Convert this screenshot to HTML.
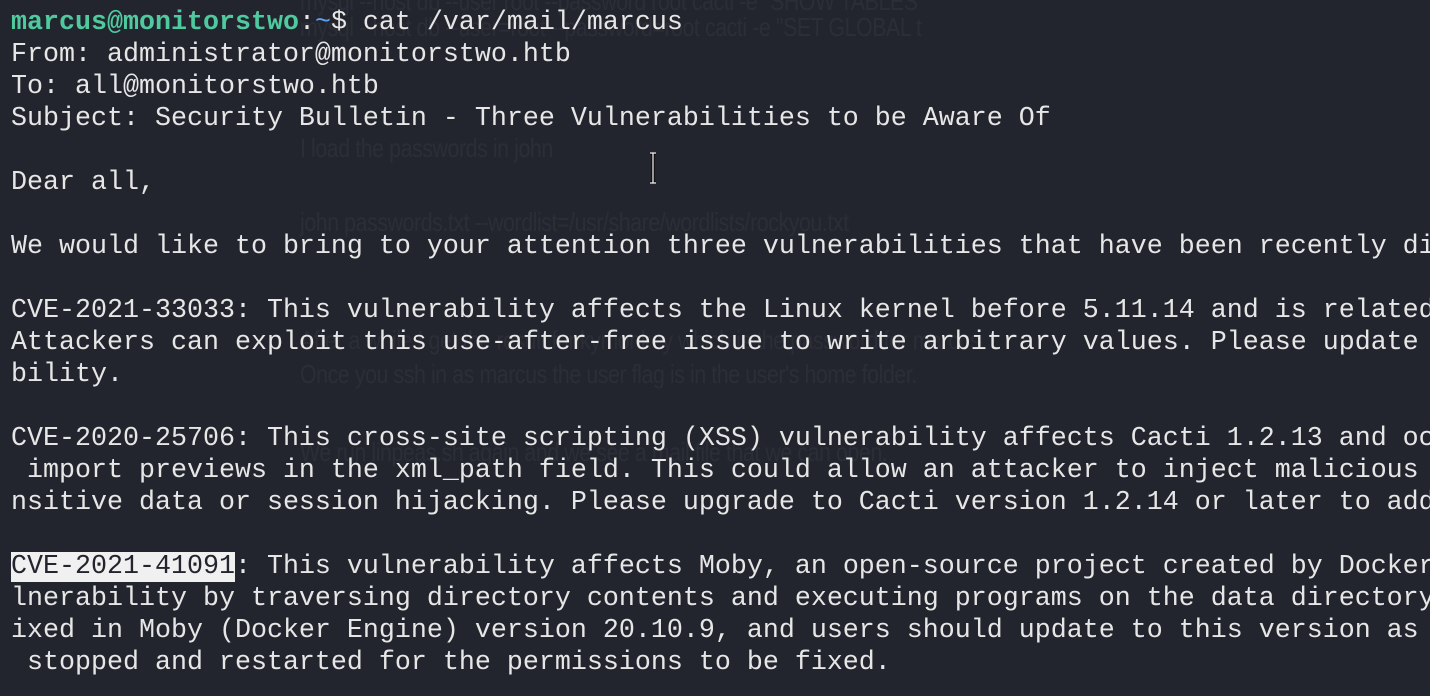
<!DOCTYPE html>
<html><head><meta charset="utf-8"><style>
html,body{margin:0;padding:0;background:#23252e;width:1430px;height:696px;overflow:hidden;position:relative}
.ghost{position:absolute;font-family:"Liberation Sans",sans-serif;color:#2c2e37;font-size:26px;white-space:pre;transform-origin:0 0;transform:scaleX(0.82);letter-spacing:-0.5px}
.term{position:absolute;left:11px;top:7px;width:1419px;overflow:hidden;font-family:"Liberation Mono","DejaVu Sans Mono",monospace;font-size:26.67px;line-height:32px;color:#e6e6e6;white-space:normal}
.term div{height:32px;white-space:pre}
.g{color:#4fc99e;font-weight:bold}
.b{color:#5aa0f0}
.hl{background:#f0f0f0;color:#23252e}
.cur{position:absolute;left:649px;top:152px;width:8px;height:32px}
</style></head><body>
<div class="ghost" style="left:300px;top:-14px">mysql --host db --user root --password root cacti -e "SHOW TABLES"</div>
<div class="ghost" style="left:300px;top:12px">mysql --host db --user=root --password=root cacti -e "SET GLOBAL t</div>
<div class="ghost" style="left:300px;top:133px">I load the passwords in john</div>
<div class="ghost" style="left:300px;top:207px">john passwords.txt --wordlist=/usr/share/wordlists/rockyou.txt</div>
<div class="ghost" style="left:300px;top:325px">After a while I get the result funkymonkey which is the password for marcus</div>
<div class="ghost" style="left:300px;top:359px">Once you ssh in as marcus the user flag is in the user's home folder.</div>
<div class="ghost" style="left:300px;top:437px">We run linpeas.sh again and we see a mail file that we can open.</div>
<div class="term"><div><span class="g">marcus@monitorstwo</span>:<span class="b">~</span>$ cat /var/mail/marcus</div><div>From: administrator@monitorstwo.htb</div><div>To: all@monitorstwo.htb</div><div>Subject: Security Bulletin - Three Vulnerabilities to be Aware Of</div><div></div><div>Dear all,</div><div></div><div>We would like to bring to your attention three vulnerabilities that have been recently discovered</div><div></div><div>CVE-2021-33033: This vulnerability affects the Linux kernel before 5.11.14 and is related to</div><div>Attackers can exploit this use-after-free issue to write arbitrary values. Please update your</div><div>bility.</div><div></div><div>CVE-2020-25706: This cross-site scripting (XSS) vulnerability affects Cacti 1.2.13 and occurs</div><div> import previews in the xml_path field. This could allow an attacker to inject malicious code</div><div>nsitive data or session hijacking. Please upgrade to Cacti version 1.2.14 or later to address</div><div></div><div><span class="hl">CVE-2021-41091</span>: This vulnerability affects Moby, an open-source project created by Docker</div><div>lnerability by traversing directory contents and executing programs on the data directory</div><div>ixed in Moby (Docker Engine) version 20.10.9, and users should update to this version as</div><div> stopped and restarted for the permissions to be fixed.</div></div>
<svg class="cur" viewBox="0 0 8 32"><path d="M1 1h6M4 1v30M1 31h6" stroke="#000" stroke-width="3" fill="none"/><path d="M1 1h6M4 1v30M1 31h6" stroke="#fff" stroke-width="1.2" fill="none"/></svg>
</body></html>
